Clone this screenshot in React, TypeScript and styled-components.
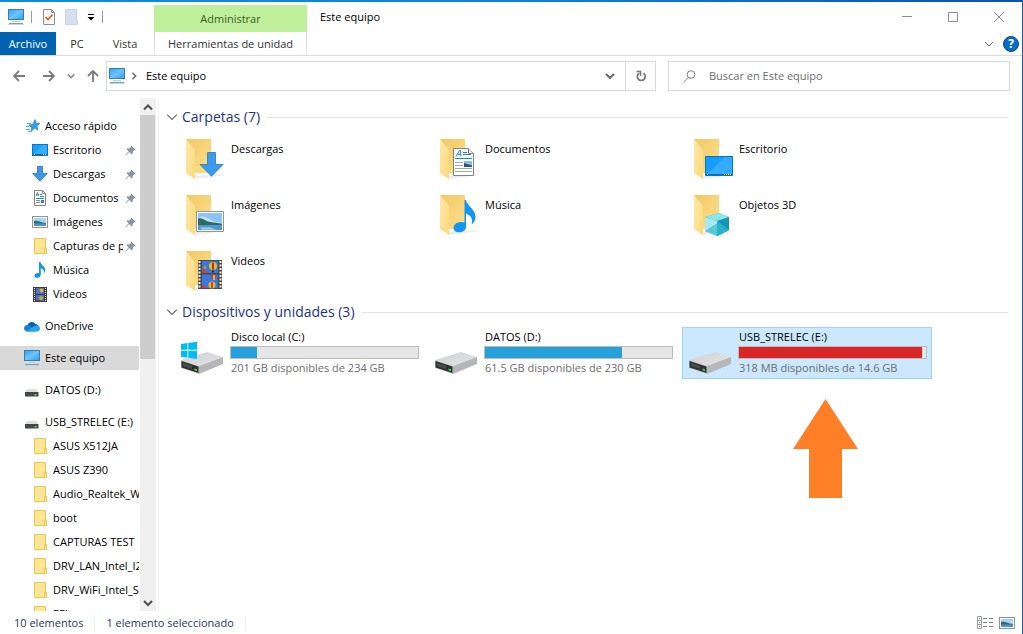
import React from "react";
import styled, { createGlobalStyle } from "styled-components";

const GlobalStyle = createGlobalStyle`
  *, *::before, *::after { box-sizing: border-box; }
  body {
    margin: 0;
    background: #fff;
    color: #000;
    font: 11px/16px "Open Sans", "Noto Sans", sans-serif;
  }
  button, input { font: inherit; color: inherit; }
  button { border: 0; padding: 0; background: none; cursor: default; }
  ul { list-style: none; margin: 0; padding: 0; }
  h1, h2, p { margin: 0; font-weight: 400; }
  svg { display: block; flex: none; }
`;

/* ---------- icons ---------- */

const PcIcon = () => (
  <svg width="16" height="16" viewBox="0 0 16 16" aria-hidden="true">
    <defs>
      <linearGradient id="pc" x1="0" y1="0" x2="1" y2="1">
        <stop offset="0" stopColor="#2ea3f5" />
        <stop offset="0.5" stopColor="#6cc4fb" />
        <stop offset="1" stopColor="#2f9ff0" />
      </linearGradient>
    </defs>
    <rect x="0.5" y="0.5" width="15" height="10" fill="url(#pc)" stroke="#3f7ba8" />
    <path d="M4 12.500h8" stroke="#b9d0de" />
    <path d="M1 14.500h14" stroke="#7b9cb3" />
    <path d="M0 15.500h16" stroke="#c5d5df" />
  </svg>
);

const CheckDocIcon = () => (
  <svg width="12" height="16" viewBox="0 0 12 16" aria-hidden="true">
    <path d="M.5.5h8l3 3v12H.5z" fill="#fdfdfd" stroke="#8d8d8d" />
    <path d="M8.500.5v3h3" fill="none" stroke="#8d8d8d" />
    <path d="M2.500 8l2.500 2.500 4.500-5" fill="none" stroke="#e8541d" strokeWidth="1.600" />
  </svg>
);

const BlankDocIcon = () => (
  <svg width="13" height="16" viewBox="0 0 13 16" aria-hidden="true">
    <path d="M.5.5h11v11h1v4H.5z" fill="#d5dff0" stroke="#c5d2e6" />
  </svg>
);

const CustomizeIcon = () => (
  <svg width="8" height="8" viewBox="0 0 8 8" aria-hidden="true">
    <path d="M1 1.500h6" stroke="#000" />
    <path d="M.5 4h7L4 7.500z" fill="#000" />
  </svg>
);

type ChevronProps = { dir: "up" | "down" | "right"; size?: number; weight?: number; color?: string };
const chevrons = { up: "M1 7.500l4-4 4 4", down: "M1 3l4 4 4-4", right: "M3 1l4 4-4 4" };
const Chevron = ({ dir, size = 10, weight = 2, color = "#6b6b6b" }: ChevronProps) => (
  <svg width={size} height={size} viewBox="0 0 10 10" fill="none" aria-hidden="true">
    <path d={chevrons[dir]} stroke={color} strokeWidth={weight} />
  </svg>
);

const arrows = {
  back: "M13 7H2M7 2L2 7l5 5",
  forward: "M1 7h11M7 2l5 5-5 5",
  up: "M7 13V2M2 7l5-5 5 5",
};
const NavArrow = ({ dir }: { dir: keyof typeof arrows }) => (
  <svg width="14" height="14" viewBox="0 0 14 14" fill="none" aria-hidden="true">
    <path d={arrows[dir]} stroke="#7b7b7b" strokeWidth="1.800" />
  </svg>
);

const RefreshIcon = () => (
  <svg width="12" height="12" viewBox="0 0 12 12" fill="none" aria-hidden="true">
    <path d="M4 3.200A4 4 0 1 0 8.500 3.200" stroke="#767676" strokeWidth="1.700" />
    <path d="M1.500 1.500h4V6" stroke="#767676" strokeWidth="1.600" />
  </svg>
);

const SearchIcon = () => (
  <svg width="13" height="13" viewBox="0 0 13 13" fill="none" stroke="#7d8388" aria-hidden="true">
    <circle cx="8" cy="4.500" r="3.800" />
    <path d="M5.300 7.300L.5 12.300" />
  </svg>
);

const MinimizeIcon = () => (
  <svg width="10" height="10" viewBox="0 0 10 10" stroke="#8c8c8c" aria-hidden="true"><path d="M0 4.500h10" /></svg>
);
const MaximizeIcon = () => (
  <svg width="10" height="10" viewBox="0 0 10 10" stroke="#8c8c8c" fill="none" aria-hidden="true"><path d="M.5.5h9v9h-9z" /></svg>
);
const CloseIcon = () => (
  <svg width="10" height="10" viewBox="0 0 10 10" stroke="#8c8c8c" aria-hidden="true"><path d="M0 0l10 10M10 0L0 10" /></svg>
);

const QuickAccessIcon = () => (
  <svg width="16" height="14" viewBox="-2 0 16 14" aria-hidden="true">
    <path d="M9 .5l1.200 3.700 3.800.3-3 2.600.9 4-3.400-2L4.800 13l.9-4.300L2.800 6l4-.4z" fill="#2f9fe8" stroke="#1675bd" strokeWidth=".6" />
    <path d="M1 4.500h4.500M0 7.500h3M0 10.500h4M2 12.500h2" stroke="#52b2ee" />
  </svg>
);

const DesktopIcon = () => (
  <svg width="16" height="12" viewBox="0 0 16 12" aria-hidden="true">
    <rect x=".5" y=".5" width="15" height="11" fill="#18a0fb" stroke="#0b76c2" />
    <path d="M1 11L11 1h4v10z" fill="#32adff" />
    <path d="M1 10.500h14" stroke="#0b64a8" />
    <path d="M2 10.500h1M11 10.500h3" stroke="#fff" strokeDasharray="1 1" />
  </svg>
);

const DownloadIcon = () => (
  <svg width="16" height="16" viewBox="0 0 16 16" aria-hidden="true">
    <path d="M5.500.5h5v7h4.800L8 15.300.7 7.500h4.800z" fill="#3c97e8" stroke="#2274bd" strokeWidth=".8" />
  </svg>
);

const DocumentIcon = () => (
  <svg width="12" height="16" viewBox="0 0 12 16" aria-hidden="true">
    <path d="M.5.500h8l3 3v12H.5z" fill="#fff" stroke="#858585" />
    <path d="M8.500.500v3h3" fill="none" stroke="#858585" />
    <path d="M2 6l1.500-3.500L5 6M2.500 5h2M6 4.500h2M6 6.500h4M2 8.500h8" fill="none" stroke="#2a86cf" />
    <path d="M2 10.500h4M2 12.500h4" stroke="#8d8d8d" />
    <path d="M7 10h3v3H7z" fill="#3d7ab0" />
  </svg>
);

const PictureIcon = () => (
  <svg width="16" height="12" viewBox="0 0 16 12" aria-hidden="true">
    <rect x=".5" y=".5" width="15" height="11" fill="#fff" stroke="#8e9499" />
    <path d="M2 2h12v8H2z" fill="#a6d4f6" />
    <path d="M2 5c4-1 6 1.500 12 2v1H2z" fill="#2f6f73" />
    <path d="M2 7.500h12V10H2z" fill="#4f93c8" />
  </svg>
);

const FolderIcon = () => (
  <svg width="16" height="16" viewBox="-2 0 16 16" aria-hidden="true">
    <path d="M.5.5h11v9.500h1v5.500H.5z" fill="#ffe594" stroke="#ecc653" />
    <path d="M10.500 15.500v-5h2" fill="none" stroke="#ecc653" />
  </svg>
);

const MusicIcon = () => (
  <svg width="12" height="16" viewBox="0 0 12 16" aria-hidden="true">
    <path d="M5 0h1.500c.3 3 4.800 4.200 4.800 7.800 0 1.600-.6 2.700-1.300 3.600.4-2.600-.7-4.300-3.200-5.200V12.500c0 2-1.800 3.300-3.700 3.300C1.500 15.800.5 15 .5 13.700c0-1.700 2.200-3 4.500-2.500z" fill="#1596ee" />
  </svg>
);

const FilmIcon = () => (
  <svg width="14" height="15" viewBox="0 0 14 15" aria-hidden="true">
    <path d="M0 0h14v15H0z" fill="#3e3e3e" />
    <path d="M1.500 1v14M12.500 1v14" stroke="#e5e5e5" strokeDasharray="1 1" />
    <path d="M3 1h8v6H3zM3 8h8v6H3z" fill="#3f74d4" />
    <circle cx="8.500" cy="3.500" r="2" fill="#e0b321" />
    <circle cx="5" cy="5" r="1" fill="#d9593b" />
    <circle cx="8" cy="11" r="2" fill="#e0a31d" />
    <path d="M3 13h4v1H3z" fill="#a33" />
  </svg>
);

const OneDriveIcon = () => (
  <svg width="16" height="11" viewBox="0 0 16 11" aria-hidden="true">
    <path d="M3.500 4A4.500 4.500 0 0 1 11.500 3c2 .2 2.500 1 3 2l-6 2-5-1z" fill="#0a5fb4" />
    <path d="M3.300 4C1.500 4 0 5.400 0 7.300S1.500 10.600 3.300 10.600h9L5 4.500C4.500 4.100 3.900 4 3.300 4z" fill="#1283d8" />
    <path d="M12 4.600c2.300-.4 4 1 4 3 0 1.800-1.300 3-3 3H3.300L9 5.800c.9-.7 1.900-1.100 3-1.200z" fill="#28a8ea" />
  </svg>
);

const SmallDriveIcon = () => (
  <svg width="16" height="16" viewBox="-1 -7 16 16" aria-hidden="true">
    <path d="M2 0h9l2.500 3H0z" fill="#dcdedf" />
    <path d="M0 3h13.500v4.500H0z" fill="#454848" />
    <path d="M9.500 5h2v1.500h-2z" fill="#3ce04e" />
  </svg>
);

const PinIcon = () => (
  <svg width="11" height="11" viewBox="0 0 11 11" aria-hidden="true">
    <path d="M6.200.6l4.200 4-1.300.6-1.500 1.800.1 2.300L6.400 9 4.200 6.900.6 10.600l-.4-.4L3.600 6.200 1.700 4.400l.4-1.100 2.400.1L5.900 1.900z" fill="#87949f" />
  </svg>
);

/* Overlays drawn on top of the open folder, in the folder's 48px box. */
const folderArt = {
  download: <path d="M29.500 18.500h8v12h7.500L33.500 42.300 22 30.500h7.500z" fill="#3d9bec" stroke="#2279c6" strokeWidth=".8" />,
  document: (
    <>
      <path d="M21.500 14.500h15l5 5v22h-20z" fill="#fff" stroke="#7e8489" />
      <path d="M36.500 14.500v5h5" fill="#eee" stroke="#7e8489" />
      <path d="M24 22.500l3.500-6h1l.5 6M25.500 20.500h3M31 18.500h4M31 20.500h8" fill="none" stroke="#1f84cf" />
      <path d="M23 24.500h17" stroke="#1f84cf" />
      <path d="M23 28.500h8M23 31.500h8M23 34.500h17M23 37.500h17" stroke="#a4a9ad" />
      <path d="M32 27h8v6h-8z" fill="#8dbfe6" />
      <path d="M32 29l8 2.500V33h-8z" fill="#2a5870" />
    </>
  ),
  desktop: (
    <>
      <path d="M19.500 22.500h27v19h-27z" fill="#169df9" stroke="#0a70b9" />
      <path d="M20 41L39 23h7v17z" fill="#34abff" />
      <path d="M20 40.500h26" stroke="#0b6fbd" />
      <path d="M21 40.500h2M38 40.500h7" stroke="#fff" strokeDasharray="1 1" />
    </>
  ),
  picture: (
    <>
      <path d="M18.500 21.500h27v20h-27z" fill="#fff" stroke="#8f969b" />
      <path d="M20 23h24v17H20z" fill="#8cc4f5" />
      <path d="M20 28c5-3 7-1 13 2s6 1 11 3H20z" fill="#dcecf5" opacity=".7" />
      <path d="M20 28c6 0 7 3.500 13 4 3 .5 7 1 11 2v1.500H20z" fill="#2d6b67" />
      <path d="M20 35h24v5H20z" fill="#4f97cc" />
      <path d="M22 37.500h10l6 2H24z" fill="#a7d4ea" />
    </>
  ),
  music: <path d="M32.500 10H34c1 6 9.500 9 9.500 17 0 4-2 6-4 7.500 2-6-1.500-9.500-5.500-11v13.500c0 3.500-3.500 5.300-7 5.300-3 0-5.500-1.500-5.500-4.300 0-4 5-7.500 11-5.500z" fill="#1296f3" />,
  cube: (
    <>
      <path d="M32.500 23L43 27v13l-12 6-12-5V27z" fill="#23a6c0" />
      <path d="M19 27l13.500-4L43 27l-11.500 4z" fill="#8ee6ef" />
      <path d="M19 27l12.500 4v15L19 41z" fill="#a8e8ef" />
      <path d="M19 41l12.500-8v13z" fill="#59c6d6" />
      <path d="M31.500 31L43 27v13l-11.500 6z" fill="#1395b3" />
      <path d="M31.500 31L43 40l-11.500 6z" fill="#28b3cb" />
    </>
  ),
  film: (
    <>
      <path d="M20 14h24v29H20z" fill="#4a4a48" />
      <path d="M21.500 15v28M42.500 15v28" stroke="#f1f1f1" strokeWidth="2" strokeDasharray="2 1.500" />
      <path d="M24 15h16v12H24zM24 28.500h16V42H24z" fill="#3b77dc" />
      <path d="M24 23l7 4h-7zM24 39l7 3h-7z" fill="#c0483a" />
      <circle cx="35" cy="20" r="4" fill="#e6bd22" />
      <path d="M34 16.500h2v7h-2z" fill="#b2302c" />
      <path d="M34 24.500h2v2h-2z" fill="#3a2a18" />
      <circle cx="27" cy="21.500" r="1.500" fill="#e98131" />
      <path d="M32 29h7l-2.500 4h-2z" fill="#c93c34" />
      <path d="M35 29h2v5h-2z" fill="#d9b52a" />
      <circle cx="34" cy="39" r="3.500" fill="#e6bd22" />
      <path d="M33 36h2v6h-2z" fill="#c94a2c" />
    </>
  ),
};

const BigFolder = ({ art }: { art: keyof typeof folderArt }) => (
  <svg width="48" height="48" viewBox="0 0 48 48" aria-hidden="true">
    <defs>
      <linearGradient id="back" x1="0" y1="0" x2="1" y2="1">
        <stop offset="0" stopColor="#f0c866" />
        <stop offset="1" stopColor="#ffe08a" />
      </linearGradient>
      <linearGradient id="flap" x1="0" y1="0" x2="1" y2="1">
        <stop offset="0" stopColor="#ffe9a9" />
        <stop offset="1" stopColor="#fbd97b" />
      </linearGradient>
    </defs>
    <path d="M16 42l26-2 5 1-30 4z" fill="#ededed" />
    <path d="M8 5h25v34H16z" fill="url(#back)" />
    <path d="M8 5l9 11v29L8 39z" fill="url(#flap)" />
    {folderArt[art]}
  </svg>
);

const BigDrive = ({ system }: { system?: boolean }) => (
  <svg width="48" height="48" viewBox="0 0 48 48" aria-hidden="true">
    <defs>
      <linearGradient id="lid" x1="0" y1="0" x2="1" y2="1">
        <stop offset="0" stopColor="#cfcfd2" />
        <stop offset="1" stopColor="#e6e6e8" />
      </linearGradient>
    </defs>
    <path d="M3 31l26-8 16 5-24 9z" fill="url(#lid)" />
    <path d="M21 37l24-9v7L21 45z" fill="#b5b6b8" />
    <path d="M3 31l18 6v8L3 39z" fill="#c0c0c2" />
    <path d="M3.500 32l17 5.500v6.500l-17-5.500z" fill="#2f3131" />
    <path d="M5 34l9 3v3l-9-3z" fill="#4b4e4e" />
    <path d="M16.500 39.500l2.500.7v1.800l-2.500-.7z" fill="#3fe34f" />
    {system && (
      <path d="M3 15l6.500-1v6.800H3zM10.300 13.900L19 12.700v8.100h-8.700zM3 21.800h6.500v7L3 27.800zM10.300 21.800H19V30l-8.700-1.200z" fill="#00bcf2" />
    )}
  </svg>
);

const DetailsViewIcon = () => (
  <svg width="16" height="13" viewBox="0 0 16 13" fill="none" aria-hidden="true">
    <path d="M.5.500h4v12h-4zM.5 4.500h4M.5 8.500h4" stroke="#9a9a9a" />
    <path d="M6 2.500h4M12 2.500h4M6 6.500h4M12 6.500h4M6 10.500h4M12 10.500h4" stroke="#7b7b7b" />
    <path d="M2 2.500h1" stroke="#4a7ab5" /><path d="M2 6.500h1" stroke="#3f7fd0" /><path d="M2 10.500h1" stroke="#c03535" />
  </svg>
);

const PointerArrow = () => (
  <svg width="66" height="99" viewBox="0 0 66 99" aria-hidden="true">
    <path d="M32.500 0L65 50H49v49H16V50H0z" fill="#ff7f27" />
  </svg>
);

/* ---------- window frame ---------- */

const Window = styled.div`
  display: flex;
  flex-direction: column;
  height: 100vh;
  overflow: hidden;
  border-right: 1px solid #1b5ba0;
`;

const AccentLine = styled.div`
  flex: none;
  height: 2px;
  background: linear-gradient(90deg, #0a8fdc, #0a84d8 50%, #0a52b4);
`;

const Header = styled.header`
  display: flex;
  flex: none;
  height: 54px;
  border-bottom: 1px solid #dadbdc;
`;

const HeaderStart = styled.div`
  display: flex;
  flex-direction: column;
  width: 154px;
`;

const QuickBar = styled.div`
  display: flex;
  align-items: center;
  height: 30px;
  padding-left: 8px;
`;

const Separator = styled.span<{ $space: number }>`
  width: 1px;
  height: 12px;
  margin: 0 ${(p) => p.$space}px 0 7px;
  background: #9a9a9a;
`;

const QuickButton = styled.button`
  width: 22px;
`;

const MenuRow = styled.nav`
  display: flex;
  flex: 1;
`;

const MenuTab = styled.button<{ $active?: boolean; $width: number }>`
  width: ${(p) => p.$width}px;
  background: ${(p) => (p.$active ? "#0063b1" : "transparent")};
  color: ${(p) => (p.$active ? "#fff" : "#333")};
`;

const ContextTabs = styled.div`
  display: flex;
  flex-direction: column;
  width: 153px;
  padding-top: 3px;
`;

const ContextTitle = styled.div`
  height: 27px;
  background: #c0ef9b;
  color: #3e5a2b;
  line-height: 28px;
  text-align: center;
`;

const ContextTab = styled.button`
  flex: 1;
  border-style: solid;
  border-width: 0 1px;
  border-image: linear-gradient(#cfcfcf, #dcdcdc 60%, #fff) 1;
  color: #333;
`;

const HeaderEnd = styled.div`
  display: flex;
  flex: 1;
  flex-direction: column;
`;

const TitleRow = styled.div`
  display: flex;
  align-items: center;
  justify-content: space-between;
  height: 30px;
  padding-left: 13px;
`;

const WindowTitle = styled.h1`
  font-size: 11px;
  line-height: 16px;
`;

const WindowButtons = styled.div`
  display: flex;
`;

const WindowButton = styled.button`
  display: grid;
  place-items: center;
  width: 46px;
  height: 28px;
`;

const HelpRow = styled.div`
  display: flex;
  flex: 1;
  align-items: center;
  justify-content: flex-end;
  gap: 9px;
  padding-right: 3px;
`;

const HelpButton = styled.button`
  width: 16px;
  height: 16px;
  border: 1px solid #0a4a8a;
  border-radius: 50%;
  background: #0a6ac8;
  color: #fff;
  font-size: 12px;
  font-weight: 700;
  line-height: 14px;
`;

/* ---------- address bar ---------- */

const Toolbar = styled.div`
  display: grid;
  grid-template-columns: 94px minmax(0, 550fr) minmax(0, 354fr);
  flex: none;
  height: 42px;
  padding: 5px 12px 7px;
`;

const NavButtons = styled.div`
  display: flex;
  align-items: center;
  gap: 11px;
`;

const NavGroup = styled.div`
  display: flex;
  align-items: center;
  gap: 16px;
`;

const AddressBox = styled.div`
  display: flex;
  align-items: center;
  gap: 5px;
  border: 1px solid #d9d9d9;
  padding-left: 2px;
`;

const Crumb = styled.button`
  flex: 1;
  padding-left: 3px;
  text-align: left;
`;

const AddressButtons = styled.div`
  display: flex;
  align-self: stretch;
`;

const AddressButton = styled.button<{ $divided?: boolean }>`
  display: grid;
  place-items: center;
  width: 30px;
  border-left: ${(p) => (p.$divided ? "1px solid #d9d9d9" : "0")};
`;

const SearchBox = styled.label`
  display: flex;
  align-items: center;
  gap: 13px;
  margin-left: 12px;
  border: 1px solid #d9d9d9;
  padding-left: 14px;
`;

const SearchInput = styled.input`
  flex: 1;
  min-width: 0;
  border: 0;
  padding: 0;
  outline: 0;
  background: none;
  &::placeholder { color: #6d6d6d; opacity: 1; }
`;

/* ---------- body ---------- */

const Body = styled.div`
  display: flex;
  flex: 1;
  min-height: 0;
`;

const Tree = styled.nav`
  width: 139px;
  margin-right: 1px;
  overflow: hidden;
  padding-top: 16px;
`;

const TreeGroup = styled.ul`
  margin-bottom: 8px;
`;

const TreeItem = styled.a<{ $child?: boolean; $selected?: boolean }>`
  display: flex;
  align-items: center;
  height: 24px;
  padding-left: ${(p) => (p.$child ? 32 : 24)}px;
  background: ${(p) => (p.$selected ? "#d9d9d9" : "transparent")};
  color: #000;
  text-decoration: none;
  white-space: nowrap;
`;

const TreeIcon = styled.span`
  display: grid;
  place-items: center;
  flex: none;
  width: 16px;
  height: 16px;
  margin-right: 5px;
`;

const TreeLabel = styled.span`
  flex: 1;
  min-width: 0;
  overflow: hidden;
`;

const PinSlot = styled.span`
  flex: none;
  padding: 0 3px 0 2px;
`;

const ScrollTrack = styled.div`
  display: flex;
  flex-direction: column;
  flex: none;
  width: 16px;
  background: #f0f0f0;
`;

const ScrollButton = styled.button`
  display: grid;
  place-items: center;
  width: 15px;
  height: 17px;
`;

const ScrollLane = styled.div`
  flex: 1;
`;

const ScrollThumb = styled.div`
  width: 15px;
  height: 51%;
  background: #cdcdcd;
`;

const Content = styled.main`
  flex: 1;
  min-width: 0;
  margin-left: 2px;
  border-left: 1px solid #f2f2f2;
  padding: 7px 14px 0 7px;
`;

const Group = styled.section`
  margin-bottom: 4px;
`;

const GroupHeading = styled.h2`
  display: flex;
  align-items: center;
  gap: 4px;
  height: 24px;
  margin-bottom: 3px;
  color: #1e3287;
  font-size: 14px;
  line-height: 24px;
  &::after {
    content: "";
    flex: 1;
    height: 1px;
    margin-left: 3px;
    background: #e2e2e2;
  }
`;

const Tiles = styled.ul`
  display: grid;
  grid-template-columns: repeat(auto-fill, 250px);
  gap: 4px;
  padding-left: 8px;
`;

const TileCell = styled.li`
  position: relative;
`;

const Tile = styled.button<{ $selected?: boolean }>`
  display: flex;
  gap: 4px;
  width: 100%;
  height: 52px;
  border: 1px solid ${(p) => (p.$selected ? "#99d1ff" : "transparent")};
  padding: 1px 4px 0 3px;
  background: ${(p) => (p.$selected ? "#cce8ff" : "transparent")};
  text-align: left;
`;

const FolderName = styled.span`
  padding: 7px 0 0 1px;
`;

const DriveInfo = styled.span`
  display: flex;
  flex: 1;
  flex-direction: column;
  gap: 1px;
`;

const DriveText = styled.span<{ $muted?: boolean }>`
  height: 16px;
  padding-left: 1px;
  color: ${(p) => (p.$muted ? "#6d6d6d" : "#000")};
`;

const UsageBar = styled.span`
  height: 13px;
  border: 1px solid #bcbcbc;
  background: #e6e6e6;
`;

const UsageFill = styled.span<{ $full?: boolean }>`
  display: block;
  height: 100%;
  background: ${(p) => (p.$full ? "#da2626" : "#26a0da")};
`;

const Pointer = styled.div`
  position: absolute;
  top: 72px;
  left: 111px;
`;

/* ---------- status bar ---------- */

const StatusBar = styled.footer`
  display: flex;
  flex: none;
  align-items: center;
  height: 23px;
  padding: 0 7px 0 14px;
  color: #1e395b;
`;

const StatusText = styled.span`
  border-right: 1px solid #f0f0f0;
  padding-right: 11px;
  margin-right: 11px;
`;

const ViewButtons = styled.div`
  display: flex;
  align-items: center;
  gap: 6px;
  margin-left: auto;
`;

/* ---------- data ---------- */

type Node = { label: string; icon: React.ReactNode; child?: boolean; pinned?: boolean; selected?: boolean };

const folder = (label: string): Node => ({ label, icon: <FolderIcon />, child: true });

const tree: Node[][] = [
  [
    { label: "Acceso rápido", icon: <QuickAccessIcon /> },
    { label: "Escritorio", icon: <DesktopIcon />, child: true, pinned: true },
    { label: "Descargas", icon: <DownloadIcon />, child: true, pinned: true },
    { label: "Documentos", icon: <DocumentIcon />, child: true, pinned: true },
    { label: "Imágenes", icon: <PictureIcon />, child: true, pinned: true },
    { ...folder("Capturas de pantalla"), pinned: true },
    { label: "Música", icon: <MusicIcon />, child: true },
    { label: "Videos", icon: <FilmIcon />, child: true },
  ],
  [{ label: "OneDrive", icon: <OneDriveIcon /> }],
  [{ label: "Este equipo", icon: <PcIcon />, selected: true }],
  [{ label: "DATOS (D:)", icon: <SmallDriveIcon /> }],
  [
    { label: "USB_STRELEC (E:)", icon: <SmallDriveIcon /> },
    folder("ASUS X512JA"),
    folder("ASUS Z390"),
    folder("Audio_Realtek_W10"),
    folder("boot"),
    folder("CAPTURAS TEST"),
    folder("DRV_LAN_Intel_I219"),
    folder("DRV_WiFi_Intel_S"),
    folder("EFI"),
  ],
];

const folders: { name: string; art: keyof typeof folderArt }[] = [
  { name: "Descargas", art: "download" },
  { name: "Documentos", art: "document" },
  { name: "Escritorio", art: "desktop" },
  { name: "Imágenes", art: "picture" },
  { name: "Música", art: "music" },
  { name: "Objetos 3D", art: "cube" },
  { name: "Videos", art: "film" },
];

const drives = [
  { name: "Disco local (C:)", free: "201 GB disponibles de 234 GB", used: 14, system: true },
  { name: "DATOS (D:)", free: "61.5 GB disponibles de 230 GB", used: 73 },
  { name: "USB_STRELEC (E:)", free: "318 MB disponibles de 14.6 GB", used: 98, selected: true },
];

export default function App() {
  return (
    <Window>
      <GlobalStyle />
      <AccentLine />
      <Header>
        <HeaderStart>
          <QuickBar>
            <PcIcon />
            <Separator $space={11} />
            <QuickButton aria-label="Propiedades"><CheckDocIcon /></QuickButton>
            <QuickButton aria-label="Nueva carpeta"><BlankDocIcon /></QuickButton>
            <button aria-label="Personalizar"><CustomizeIcon /></button>
            <Separator $space={0} />
          </QuickBar>
          <MenuRow>
            <MenuTab $active $width={56}>Archivo</MenuTab>
            <MenuTab $width={42}>PC</MenuTab>
            <MenuTab $width={54}>Vista</MenuTab>
          </MenuRow>
        </HeaderStart>
        <ContextTabs>
          <ContextTitle>Administrar</ContextTitle>
          <ContextTab>Herramientas de unidad</ContextTab>
        </ContextTabs>
        <HeaderEnd>
          <TitleRow>
            <WindowTitle>Este equipo</WindowTitle>
            <WindowButtons>
              <WindowButton aria-label="Minimizar"><MinimizeIcon /></WindowButton>
              <WindowButton aria-label="Maximizar"><MaximizeIcon /></WindowButton>
              <WindowButton aria-label="Cerrar"><CloseIcon /></WindowButton>
            </WindowButtons>
          </TitleRow>
          <HelpRow>
            <button aria-label="Expandir la cinta"><Chevron dir="down" weight={1} /></button>
            <HelpButton aria-label="Ayuda">?</HelpButton>
          </HelpRow>
        </HeaderEnd>
      </Header>

      <Toolbar>
        <NavButtons>
          <NavGroup>
            <button aria-label="Atrás"><NavArrow dir="back" /></button>
            <button aria-label="Adelante"><NavArrow dir="forward" /></button>
          </NavGroup>
          <button aria-label="Recientes"><Chevron dir="down" size={8} color="#8a8a8a" /></button>
          <button aria-label="Subir"><NavArrow dir="up" /></button>
        </NavButtons>
        <AddressBox>
          <PcIcon />
          <Chevron dir="right" size={8} />
          <Crumb>Este equipo</Crumb>
          <AddressButtons>
            <AddressButton aria-label="Ubicaciones anteriores"><Chevron dir="down" /></AddressButton>
            <AddressButton $divided aria-label="Actualizar"><RefreshIcon /></AddressButton>
          </AddressButtons>
        </AddressBox>
        <SearchBox>
          <SearchIcon />
          <SearchInput type="text" aria-label="Buscar" placeholder="Buscar en Este equipo" />
        </SearchBox>
      </Toolbar>

      <Body>
        <Tree>
          {tree.map((group) => (
            <TreeGroup key={group[0].label}>
              {group.map((node) => (
                <li key={node.label}>
                  <TreeItem href="#" $child={node.child} $selected={node.selected}>
                    <TreeIcon>{node.icon}</TreeIcon>
                    <TreeLabel>{node.label}</TreeLabel>
                    {node.pinned && <PinSlot><PinIcon /></PinSlot>}
                  </TreeItem>
                </li>
              ))}
            </TreeGroup>
          ))}
        </Tree>
        <ScrollTrack>
          <ScrollButton aria-label="Desplazar arriba"><Chevron dir="up" color="#505050" /></ScrollButton>
          <ScrollLane><ScrollThumb /></ScrollLane>
          <ScrollButton aria-label="Desplazar abajo"><Chevron dir="down" color="#505050" /></ScrollButton>
        </ScrollTrack>
        <Content>
          <Group>
            <GroupHeading><Chevron dir="down" size={12} weight={1} />Carpetas (7)</GroupHeading>
            <Tiles>
              {folders.map((f) => (
                <TileCell key={f.name}>
                  <Tile>
                    <BigFolder art={f.art} />
                    <FolderName>{f.name}</FolderName>
                  </Tile>
                </TileCell>
              ))}
            </Tiles>
          </Group>
          <Group>
            <GroupHeading><Chevron dir="down" size={12} weight={1} />Dispositivos y unidades (3)</GroupHeading>
            <Tiles>
              {drives.map((d) => (
                <TileCell key={d.name}>
                  <Tile $selected={d.selected}>
                    <BigDrive system={d.system} />
                    <DriveInfo>
                      <DriveText>{d.name}</DriveText>
                      <UsageBar><UsageFill $full={d.used > 90} style={{ width: `${d.used}%` }} /></UsageBar>
                      <DriveText $muted>{d.free}</DriveText>
                    </DriveInfo>
                  </Tile>
                  {d.selected && <Pointer><PointerArrow /></Pointer>}
                </TileCell>
              ))}
            </Tiles>
          </Group>
        </Content>
      </Body>

      <StatusBar>
        <StatusText>10 elementos</StatusText>
        <StatusText>1 elemento seleccionado</StatusText>
        <ViewButtons>
          <button aria-label="Detalles"><DetailsViewIcon /></button>
          <button aria-label="Iconos grandes"><PictureIcon /></button>
        </ViewButtons>
      </StatusBar>
    </Window>
  );
}
